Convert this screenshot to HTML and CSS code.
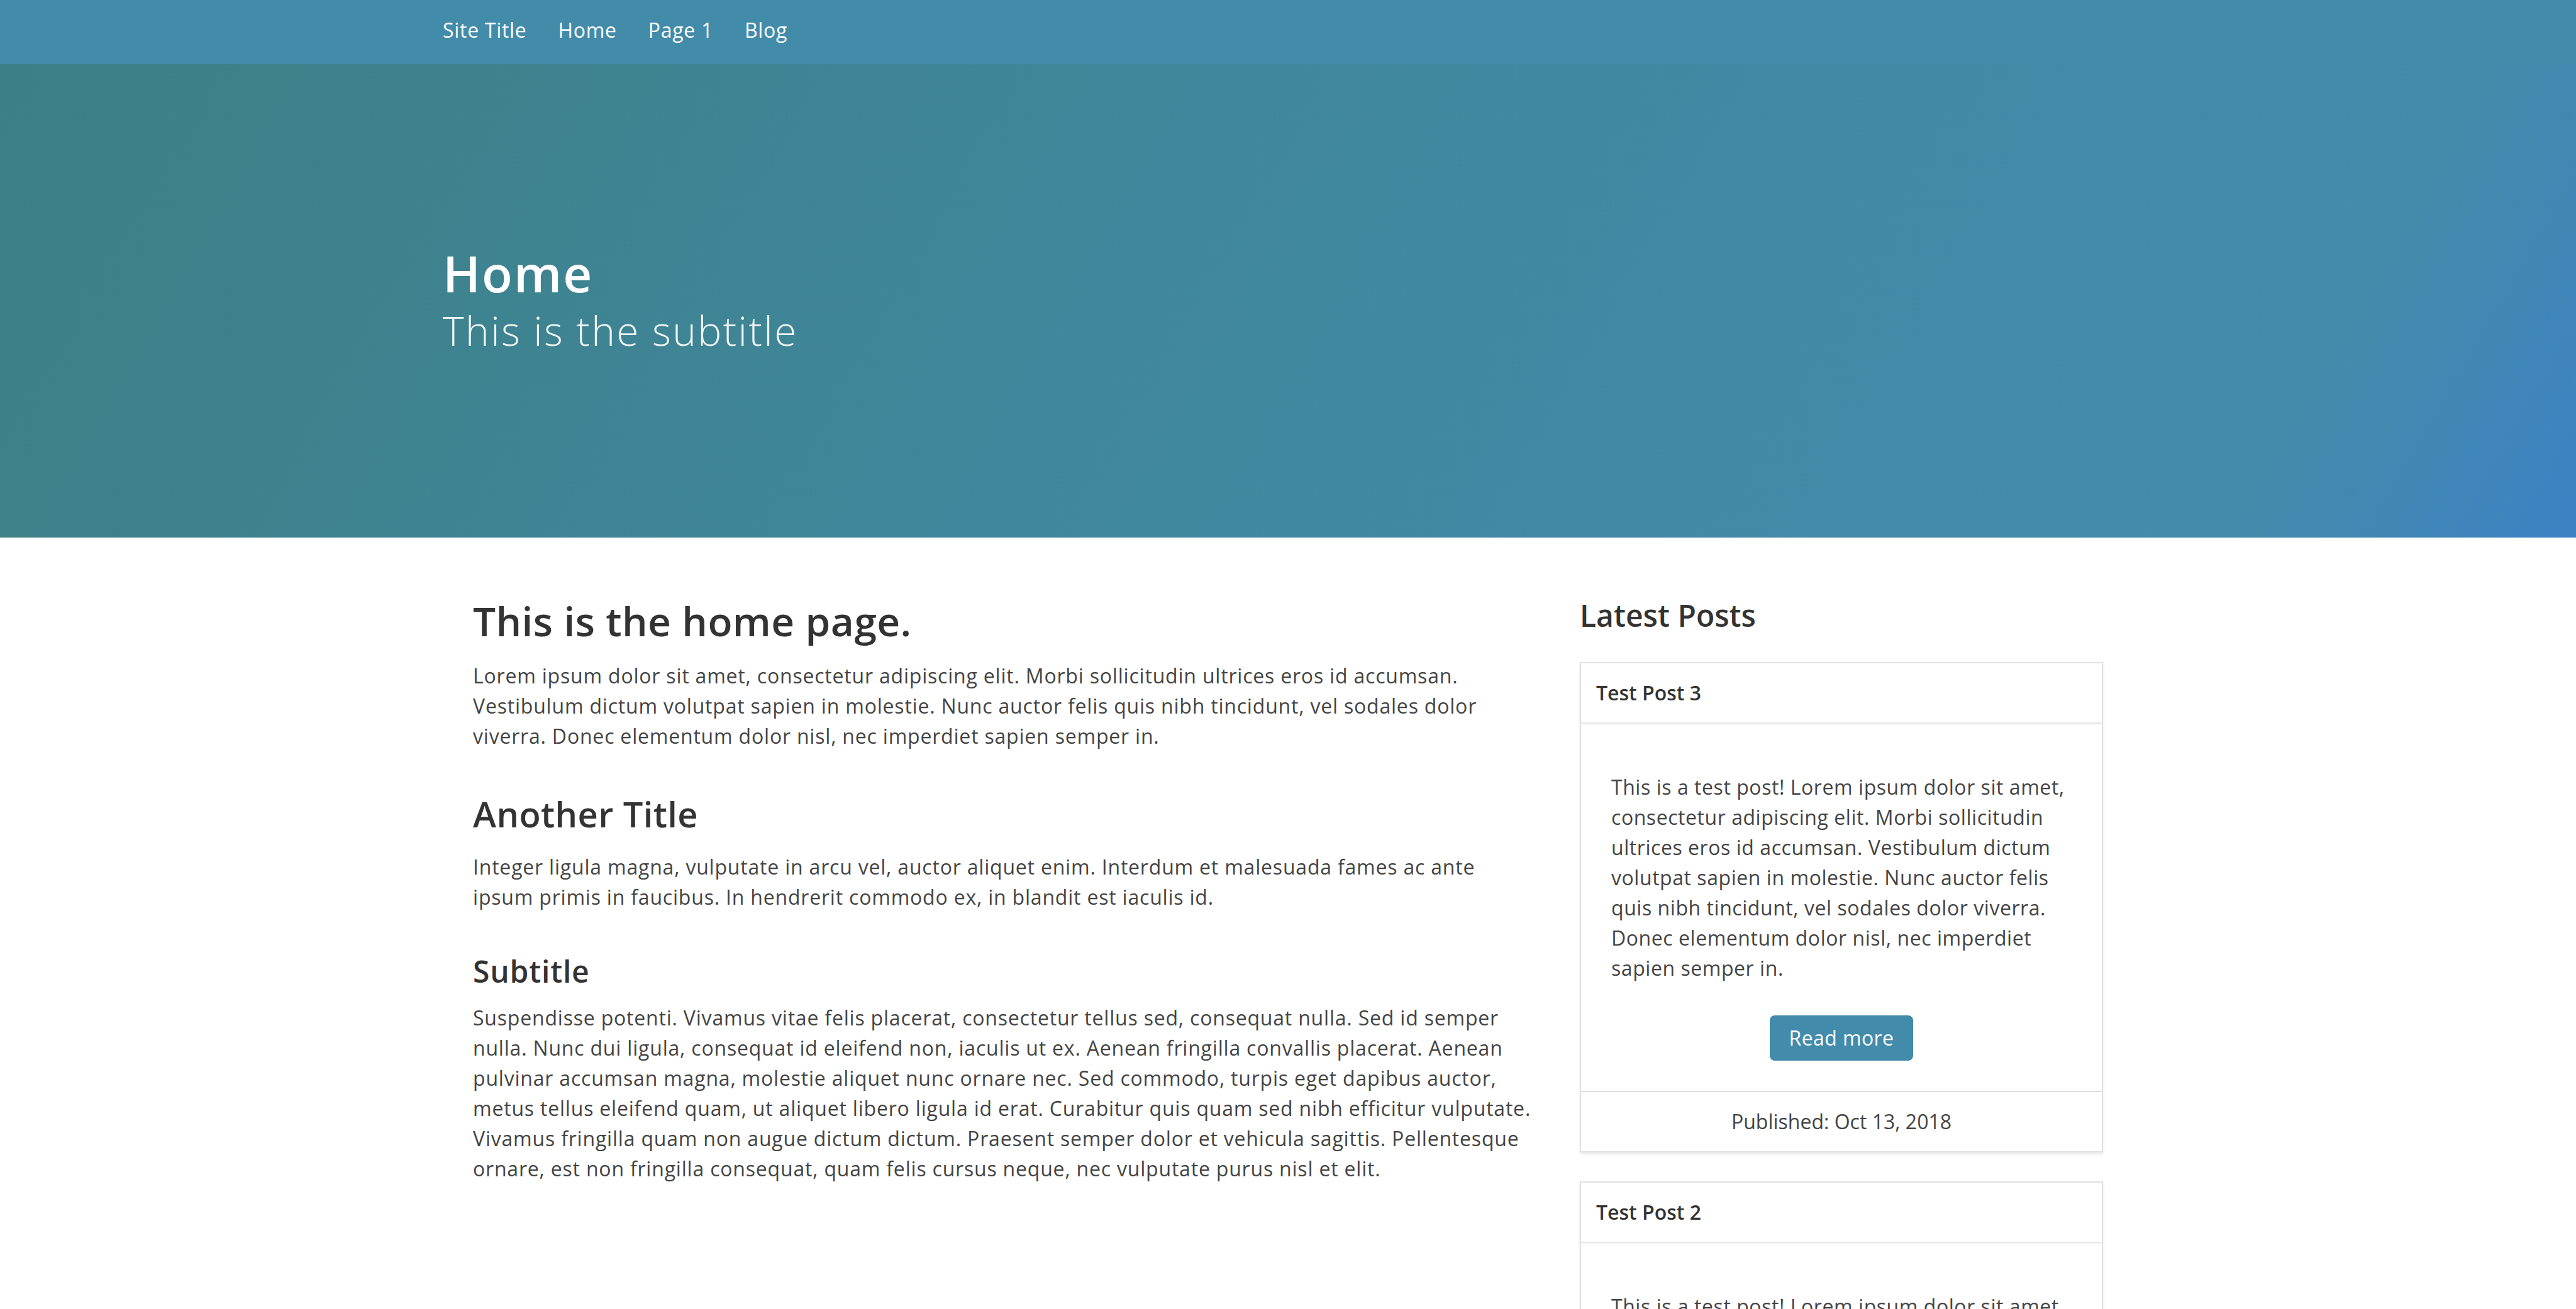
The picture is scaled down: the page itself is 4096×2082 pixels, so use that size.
FILE: index.html
```html
<!DOCTYPE html>
<html lang="en">
<head>
<meta charset="utf-8">
<title>Home</title>
<link rel="stylesheet" href="styles.css">
</head>
<body>
<nav class="navbar">
  <div class="nav-inner">
    <a class="nav-link" href="#">Site Title</a>
    <a class="nav-link" href="#">Home</a>
    <a class="nav-link" href="#">Page 1</a>
    <a class="nav-link" href="#">Blog</a>
  </div>
</nav>
<header class="hero">
  <div class="hero-inner">
    <h1 class="hero-title">Home</h1>
    <p class="hero-subtitle">This is the subtitle</p>
  </div>
</header>
<main class="content">
  <section class="main-col">
    <h2 class="page-title">This is the home page.</h2>
    <p class="text">Lorem ipsum dolor sit amet, consectetur adipiscing elit. Morbi sollicitudin ultrices eros id accumsan.<br>Vestibulum dictum volutpat sapien in molestie. Nunc auctor felis quis nibh tincidunt, vel sodales dolor<br>viverra. Donec elementum dolor nisl, nec imperdiet sapien semper in.</p>
    <h3 class="section-title">Another Title</h3>
    <p class="text">Integer ligula magna, vulputate in arcu vel, auctor aliquet enim. Interdum et malesuada fames ac ante<br>ipsum primis in faucibus. In hendrerit commodo ex, in blandit est iaculis id.</p>
    <h4 class="sub-title">Subtitle</h4>
    <p class="text">Suspendisse potenti. Vivamus vitae felis placerat, consectetur tellus sed, consequat nulla. Sed id semper<br>nulla. Nunc dui ligula, consequat id eleifend non, iaculis ut ex. Aenean fringilla convallis placerat. Aenean<br>pulvinar accumsan magna, molestie aliquet nunc ornare nec. Sed commodo, turpis eget dapibus auctor,<br>metus tellus eleifend quam, ut aliquet libero ligula id erat. Curabitur quis quam sed nibh efficitur vulputate.<br>Vivamus fringilla quam non augue dictum dictum. Praesent semper dolor et vehicula sagittis. Pellentesque<br>ornare, est non fringilla consequat, quam felis cursus neque, nec vulputate purus nisl et elit.</p>
  </section>
  <aside class="side-col">
    <h4 class="side-title">Latest Posts</h4>
    <article class="card">
      <div class="card-header">Test Post 3</div>
      <div class="card-body">
        <p class="card-text">This is a test post! Lorem ipsum dolor sit amet,<br>consectetur adipiscing elit. Morbi sollicitudin<br>ultrices eros id accumsan. Vestibulum dictum<br>volutpat sapien in molestie. Nunc auctor felis<br>quis nibh tincidunt, vel sodales dolor viverra.<br>Donec elementum dolor nisl, nec imperdiet<br>sapien semper in.</p>
        <div class="btn-row"><a class="btn" href="#">Read more</a></div>
      </div>
      <div class="card-footer">Published: Oct 13, 2018</div>
    </article>
    <article class="card">
      <div class="card-header">Test Post 2</div>
      <div class="card-body">
        <p class="card-text">This is a test post! Lorem ipsum dolor sit amet,<br>consectetur adipiscing elit. Morbi sollicitudin<br>ultrices eros id accumsan. Vestibulum dictum<br>volutpat sapien in molestie. Nunc auctor felis<br>quis nibh tincidunt, vel sodales dolor viverra.<br>Donec elementum dolor nisl, nec imperdiet<br>sapien semper in.</p>
        <div class="btn-row"><a class="btn" href="#">Read more</a></div>
      </div>
      <div class="card-footer">Published: Oct 12, 2018</div>
    </article>
  </aside>
</main>
</body>
</html>
```
FILE: styles.css
```css
html, body {
  margin: 0;
  padding: 0;
}
body {
  font-family: "Open Sans", Lato, sans-serif;
  font-size: 32px;
  line-height: 48px;
  color: #444;
  background: #fff;
}
.navbar {
  height: 102px;
  box-sizing: border-box;
  padding-top: 24px;
  background: #428ba9;
}
.nav-inner {
  width: 2688px;
  margin: 0 auto;
  display: flex;
  gap: 50px;
}
.nav-link {
  color: #fff;
  text-decoration: none;
  font-size: 32px;
  line-height: 48px;
  letter-spacing: 0.7px;
}
.hero {
  height: 753px;
  box-sizing: border-box;
  padding-top: 284px;
  background: linear-gradient(120deg, #3c7f87 0%, #3d8189 10%, #4088a0 50%, #438bab 88%, #3d82c4 100%);
}
.hero-inner {
  width: 2688px;
  margin: 0 auto;
  color: #fff;
}
.hero-title {
  margin: 0;
  font-size: 80px;
  line-height: 96px;
  font-weight: 600;
  letter-spacing: 2px;
}
.hero-subtitle {
  margin: 5px 0 0;
  font-size: 64px;
  line-height: 77px;
  font-weight: 300;
  letter-spacing: 2.4px;
  color: #eef4f6;
}
.content {
  width: 2592px;
  margin: 0 auto;
  padding-top: 95px;
  display: grid;
  grid-template-columns: 1712px 832px;
  column-gap: 48px;
}
.page-title,
.section-title,
.sub-title,
.side-title {
  color: #333;
  font-weight: 600;
  line-height: 1.2;
}
.page-title {
  font-size: 64px;
  margin: 0 0 24px;
  letter-spacing: 0.4px;
}
.section-title {
  font-size: 56px;
  margin: 66px 0 27px;
  letter-spacing: 0.4px;
}
.sub-title {
  font-size: 48px;
  margin: 65px 0 21px;
  letter-spacing: 0.8px;
}
.text {
  margin: 0;
  letter-spacing: 0.8px;
}
.side-title {
  font-size: 48px;
  margin: 0 0 45px;
}
.card {
  border: 2px solid #e1e1e1;
  box-shadow: 0 3px 5px rgba(0, 0, 0, 0.08);
  margin-bottom: 46px;
  background: #fff;
}
.card-header {
  padding: 23px 24px;
  border-bottom: 2px solid #e8e8e8;
  box-shadow: 0 2px 3px rgba(0, 0, 0, 0.04);
  color: #333;
  font-weight: 600;
}
.card-body {
  padding: 77px 48px 48px;
}
.card-text {
  margin: 0 0 51px;
  letter-spacing: 0.55px;
}
.btn-row {
  display: flex;
  justify-content: center;
}
.btn {
  display: block;
  width: 228px;
  height: 72px;
  box-sizing: border-box;
  padding: 12px 0;
  text-align: center;
  background: #428bab;
  color: #fff;
  border-radius: 8px;
  text-decoration: none;
  letter-spacing: 0.4px;
}
.card-footer {
  border-top: 2px solid #dcdcdc;
  padding: 23px 24px;
  text-align: center;
  color: #444;
}
```
